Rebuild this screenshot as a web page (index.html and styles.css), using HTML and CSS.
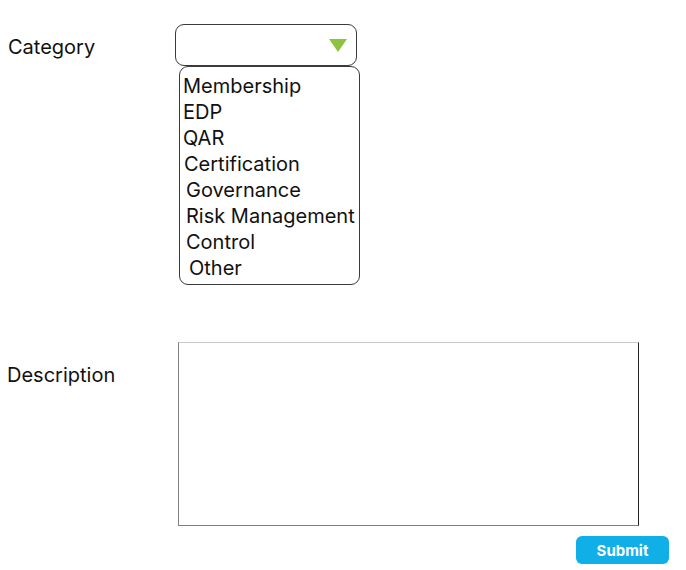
FILE: index.html
```html
<!DOCTYPE html>
<html lang="en">
<head>
<meta charset="utf-8">
<title>Category form</title>
<link rel="stylesheet" href="styles.css">
</head>
<body>
<form class="form">
  <div class="row row-category">
    <label class="label label-category">Category</label>
    <div class="select-wrap">
      <div class="select"><span class="caret"></span></div>
      <ul class="options">
        <li class="option">Membership</li>
        <li class="option">EDP</li>
        <li class="option">QAR</li>
        <li class="option indent-1">Certification</li>
        <li class="option indent-3">Governance</li>
        <li class="option indent-3">Risk Management</li>
        <li class="option indent-3">Control</li>
        <li class="option indent-6">Other</li>
      </ul>
    </div>
  </div>
  <div class="row row-description">
    <label class="label label-description">Description</label>
    <div class="desc-wrap">
      <textarea class="textarea"></textarea>
      <button type="button" class="submit">Submit</button>
    </div>
  </div>
</form>
</body>
</html>
```

FILE: styles.css
```css
html, body {
  margin: 0;
  padding: 0;
  background: #ffffff;
}

body {
  font-family: Inter, "Noto Sans", sans-serif;
  color: #111111;
}

.form {
  padding: 24px 0 0 8px;
}

.row {
  display: flex;
  align-items: flex-start;
}

.label {
  font-size: 20px;
  color: #111111;
}

.label-category {
  width: 167px;
  line-height: 42px;
  padding-top: 2px;
}

.select-wrap {
  display: flex;
  flex-direction: column;
}

.select {
  box-sizing: border-box;
  width: 182px;
  height: 42px;
  border: 1px solid #3a3a3a;
  border-radius: 9px;
  display: flex;
  align-items: center;
  justify-content: flex-end;
  padding-right: 9px;
}

.caret {
  width: 0;
  height: 0;
  border-left: 9px solid transparent;
  border-right: 9px solid transparent;
  border-top: 13px solid #8cc43f;
  margin-top: 1px;
}

.options {
  list-style: none;
  box-sizing: border-box;
  margin: 0 0 0 4px;
  width: 181px;
  height: 219px;
  border: 1px solid #3a3a3a;
  border-radius: 9px;
  padding: 6px 0 0 3px;
}

.option {
  font-size: 20px;
  line-height: 26px;
  color: #111111;
  white-space: nowrap;
}

.indent-1 { padding-left: 1px; }
.indent-3 { padding-left: 3px; }
.indent-6 { padding-left: 6px; }

.row-description {
  margin-top: 57px;
}

.label-description {
  box-sizing: border-box;
  width: 171px;
  margin-left: -1px;
  line-height: 24px;
  margin-top: 21px;
}

.desc-wrap {
  display: flex;
  flex-direction: column;
  width: 491px;
}

.textarea {
  box-sizing: border-box;
  width: 461px;
  height: 184px;
  margin: 0;
  padding: 2px;
  resize: none;
  border-style: solid;
  border-width: 1px;
  border-top-color: #c9c9c9;
  border-left-color: #808080;
  border-right-color: #222222;
  border-bottom-color: #808080;
  outline: none;
  background: #ffffff;
}

.submit {
  align-self: flex-end;
  margin-top: 10px;
  width: 93px;
  height: 28px;
  border: none;
  border-radius: 6px;
  background: #10afe7;
  color: #ffffff;
  font-family: Inter, "Noto Sans", sans-serif;
  font-weight: 700;
  font-size: 15px;
  padding: 0;
}
```
